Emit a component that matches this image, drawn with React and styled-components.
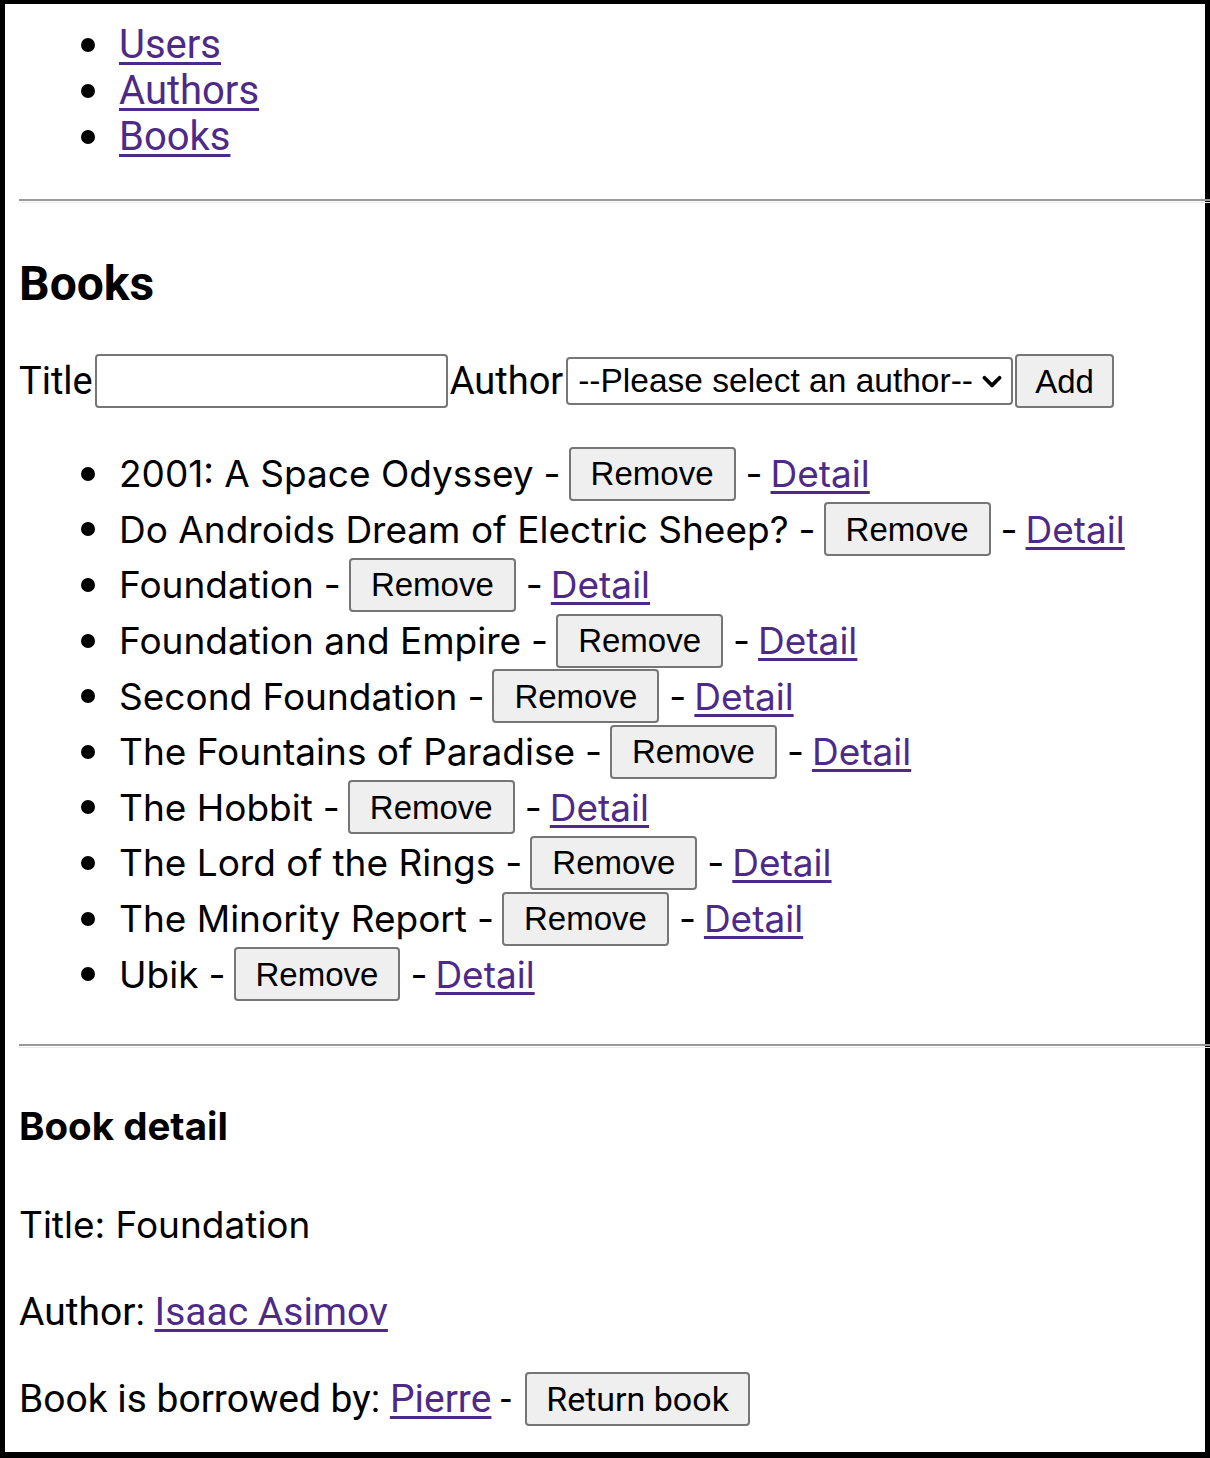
import React from "react";
import styled, { createGlobalStyle } from "styled-components";

const Global = createGlobalStyle`
  html, body { margin: 0; padding: 0; background: #fff; }
  body { font-family: Inter, "Liberation Sans", sans-serif; color: #000; }
`;

const Frame = styled.div`
  box-sizing: border-box;
  width: 1210px;
  height: 1458px;
  border-style: solid;
  border-color: #000;
  border-width: 4px 5px 6px 5px;
  padding: 0 0 0 14px;
  overflow: visible;
`;

const Nav = styled.ul`
  list-style: none;
  margin: 18px 0 0 0;
  padding: 0 0 0 60px;
  font-family: Roboto, sans-serif;
  font-size: 40px;
  line-height: 46px;
`;

const NavItem = styled.li`
  display: flex;
  align-items: center;
  height: 46px;
`;

const Bullet = styled.span`
  width: 14px;
  height: 14px;
  border-radius: 50%;
  background: #000;
  margin: 0 24px 0 2px;
  flex: none;
`;

const Link = styled.a`
  color: #4e2a88;
  text-decoration: underline;
  text-decoration-thickness: 3px;
  text-underline-offset: 4px;
  cursor: pointer;
`;

const Rule = styled.hr`
  margin: ${(p) => p.$top}px -5px 0 0;
  border: 0;
  height: 1px;
  border-top: 2px solid #9a9a9a;
  border-bottom: 1px solid #ececec;
`;

const Heading = styled.h2`
  margin: 55px 0 0 0;
  font-family: Roboto, sans-serif;
  font-weight: 700;
  font-size: 48px;
  line-height: 51px;
`;

const Form = styled.form`
  display: flex;
  align-items: center;
  margin-top: 45px;
  font-family: Roboto, sans-serif;
  font-size: 38px;
  height: 54px;
`;

const Label = styled.label`
  line-height: 54px;
`;

const TextInput = styled.input`
  box-sizing: border-box;
  width: 353px;
  height: 54px;
  margin: 0 2px 0 2px;
  border: 2px solid #767676;
  border-radius: 4px;
  background: #fff;
  font-size: 32px;
`;

const SelectBox = styled.div`
  box-sizing: border-box;
  display: flex;
  align-items: center;
  justify-content: space-between;
  width: 447px;
  height: 48px;
  margin: 0 2px 0 3px;
  padding: 0 0 0 10px;
  border: 2px solid #767676;
  border-radius: 4px;
  background: #fff;
  font-family: "Liberation Sans", Arial, sans-serif;
  font-size: 33.5px;
`;

const Chevron = styled.svg`
  width: 26px;
  height: 26px;
  margin-right: 6px;
`;

const Button = styled.button`
  box-sizing: border-box;
  height: ${(p) => p.$h || 54}px;
  padding: 0 ${(p) => p.$px || 20}px;
  border: 2px solid #767676;
  border-radius: 4px;
  background: #efefef;
  color: #000;
  font-family: ${(p) => p.$font || '"Liberation Sans", Arial, sans-serif'};
  font-size: ${(p) => p.$size || 33}px;
  line-height: 1;
  cursor: pointer;
  flex: none;
`;

const BookList = styled.ul`
  list-style: none;
  margin: 38px 0 0 0;
  padding: 0 0 0 60px;
  font-family: Inter, sans-serif;
  font-size: 37px;
`;

const BookItem = styled.li`
  display: flex;
  align-items: center;
  height: 55.6px;
  white-space: nowrap;
`;

const Sep = styled.span`
  margin: 0 ${(p) => p.$r ?? 8}px 0 ${(p) => p.$l ?? 10}px;
`;

const SubHeading = styled.h3`
  margin: 56px 0 0 0;
  font-family: Inter, sans-serif;
  font-weight: 700;
  font-size: 38.5px;
  line-height: 44px;
`;

const Para = styled.p`
  display: flex;
  align-items: center;
  margin: ${(p) => p.$top}px 0 0 0;
  height: 54px;
  font-family: ${(p) => p.$font || "Inter, sans-serif"};
  font-size: ${(p) => p.$size || 37}px;
  white-space: pre;
`;

const books = [
  "2001: A Space Odyssey",
  "Do Androids Dream of Electric Sheep?",
  "Foundation",
  "Foundation and Empire",
  "Second Foundation",
  "The Fountains of Paradise",
  "The Hobbit",
  "The Lord of the Rings",
  "The Minority Report",
  "Ubik",
];

export default function App() {
  return (
    <>
      <Global />
      <Frame>
        <Nav>
          <NavItem><Bullet /><Link>Users</Link></NavItem>
          <NavItem><Bullet /><Link>Authors</Link></NavItem>
          <NavItem><Bullet /><Link>Books</Link></NavItem>
        </Nav>
        <Rule $top={39} />
        <Heading>Books</Heading>
        <Form onSubmit={(e) => e.preventDefault()}>
          <Label>Title</Label>
          <TextInput type="text" />
          <Label>Author</Label>
          <SelectBox>
            <span>--Please select an author--</span>
            <Chevron viewBox="0 0 24 24" fill="none" stroke="#000" strokeWidth="3.5" strokeLinecap="round" strokeLinejoin="round">
              <path d="M5 9l7 7 7-7" />
            </Chevron>
          </SelectBox>
          <Button type="submit" $px={18}>Add</Button>
        </Form>
        <BookList>
          {books.map((b) => (
            <BookItem key={b}>
              <Bullet />
              <span>{b}</span>
              <Sep>-</Sep>
              <Button type="button">Remove</Button>
              <Sep>-</Sep>
              <Link>Detail</Link>
            </BookItem>
          ))}
        </BookList>
        <Rule $top={42} />
        <SubHeading>Book detail</SubHeading>
        <Para $top={50}>Title: Foundation</Para>
        <Para $top={33} $font="Roboto, sans-serif" $size={39}>Author: <Link>Isaac Asimov</Link></Para>
        <Para $top={33} $font="Roboto, sans-serif" $size={39}>
          Book is borrowed by: <Link>Pierre</Link>
          <Sep $l={9} $r={14}>-</Sep>
          <Button type="button" $font="Roboto, sans-serif" $size={34} $px={19}>Return book</Button>
        </Para>
      </Frame>
    </>
  );
}
